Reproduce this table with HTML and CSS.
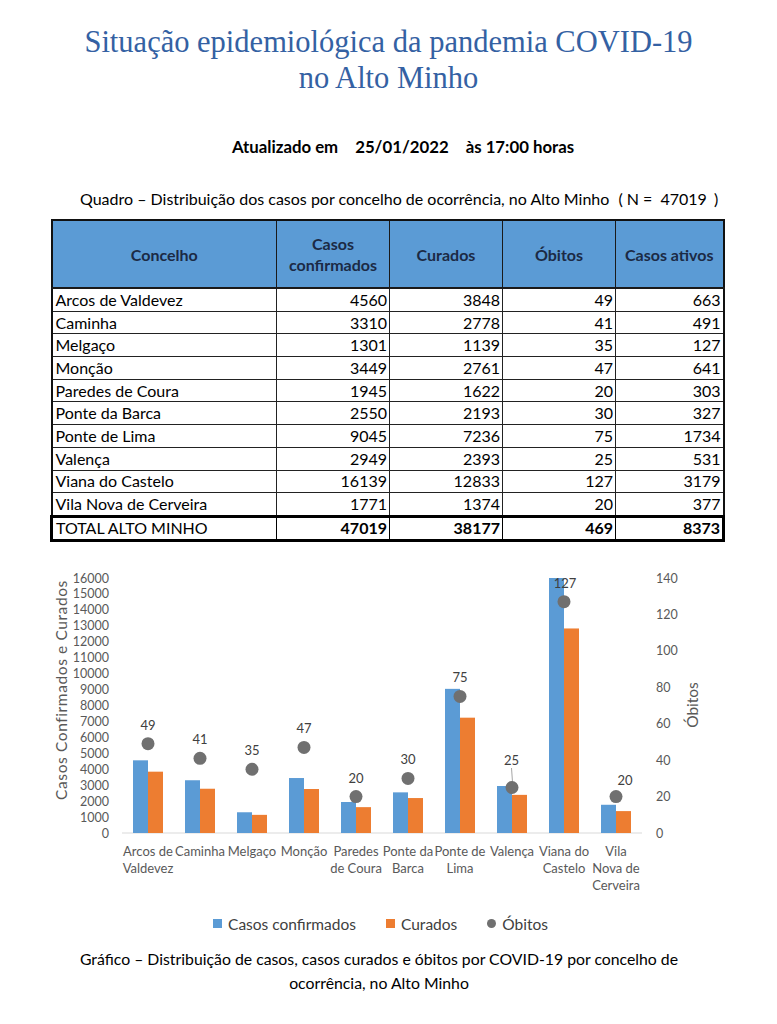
FILE: index.html
```html
<!DOCTYPE html>
<html lang="pt">
<head>
<meta charset="utf-8">
<title>Situação epidemiológica COVID-19 no Alto Minho</title>
<link rel="stylesheet" href="styles.css">
</head>
<body>
<h1 class="title">Situação epidemiológica da pandemia COVID-19<br>no Alto Minho</h1>

<p class="updated"><span>Atualizado em</span><span>25/01/2022</span><span>às 17:00 horas</span></p>

<p class="quadro">Quadro – Distribuição dos casos por concelho de ocorrência, no Alto Minho <span class="n">( N = <span class="nval">47019</span> )</span></p>

<table class="covid">
  <colgroup>
    <col class="c-name"><col class="c-num"><col class="c-num"><col class="c-num"><col class="c-last">
  </colgroup>
  <thead>
    <tr><th>Concelho</th><th>Casos<br>confirmados</th><th>Curados</th><th>Óbitos</th><th>Casos ativos</th></tr>
  </thead>
  <tbody>
    <tr><td>Arcos de Valdevez</td><td>4560</td><td>3848</td><td>49</td><td>663</td></tr>
    <tr><td>Caminha</td><td>3310</td><td>2778</td><td>41</td><td>491</td></tr>
    <tr><td>Melgaço</td><td>1301</td><td>1139</td><td>35</td><td>127</td></tr>
    <tr><td>Monção</td><td>3449</td><td>2761</td><td>47</td><td>641</td></tr>
    <tr><td>Paredes de Coura</td><td>1945</td><td>1622</td><td>20</td><td>303</td></tr>
    <tr><td>Ponte da Barca</td><td>2550</td><td>2193</td><td>30</td><td>327</td></tr>
    <tr><td>Ponte de Lima</td><td>9045</td><td>7236</td><td>75</td><td>1734</td></tr>
    <tr><td>Valença</td><td>2949</td><td>2393</td><td>25</td><td>531</td></tr>
    <tr><td>Viana do Castelo</td><td>16139</td><td>12833</td><td>127</td><td>3179</td></tr>
    <tr><td>Vila Nova de Cerveira</td><td>1771</td><td>1374</td><td>20</td><td>377</td></tr>
  </tbody>
  <tfoot>
    <tr class="total"><td>TOTAL ALTO MINHO</td><td>47019</td><td>38177</td><td>469</td><td>8373</td></tr>
  </tfoot>
</table>

<svg class="chart" viewBox="0 560 777 335" width="777" height="335" xmlns="http://www.w3.org/2000/svg">
  <g class="tick tl">
    <text x="109" y="832">0</text>
    <text x="109" y="816.06">1000</text>
    <text x="109" y="800.13">2000</text>
    <text x="109" y="784.19">3000</text>
    <text x="109" y="768.25">4000</text>
    <text x="109" y="752.31">5000</text>
    <text x="109" y="736.38">6000</text>
    <text x="109" y="720.44">7000</text>
    <text x="109" y="704.5">8000</text>
    <text x="109" y="688.56">9000</text>
    <text x="109" y="672.63">10000</text>
    <text x="109" y="656.69">11000</text>
    <text x="109" y="640.75">12000</text>
    <text x="109" y="624.81">13000</text>
    <text x="109" y="608.88">14000</text>
    <text x="109" y="592.94">15000</text>
    <text x="109" y="577">16000</text>
  </g>
  <g class="tick tr">
    <text x="656" y="832">0</text>
    <text x="656" y="795.57">20</text>
    <text x="656" y="759.14">40</text>
    <text x="656" y="722.71">60</text>
    <text x="656" y="686.29">80</text>
    <text x="656" y="649.86">100</text>
    <text x="656" y="613.43">120</text>
    <text x="656" y="577">140</text>
  </g>
  <text class="axis-title wide" transform="translate(61 689) rotate(-90)">Casos Confirmados e Curados</text>
  <text class="axis-title" transform="translate(692 704) rotate(-90)">Óbitos</text>

  <line class="baseline" x1="122" y1="832" x2="642" y2="832"/>

  <g class="conf">
    <rect x="133" y="759.32" width="15" height="72.68"/>
    <rect x="185" y="779.25" width="15" height="52.75"/>
    <rect x="237" y="811.27" width="15" height="20.73"/>
    <rect x="289" y="777.03" width="15" height="54.97"/>
    <rect x="341" y="801" width="15" height="31"/>
    <rect x="393" y="791.36" width="15" height="40.64"/>
    <rect x="445" y="687.85" width="15" height="144.15"/>
    <rect x="497" y="785" width="15" height="47"/>
    <rect x="549" y="577" width="15" height="255"/>
    <rect x="601" y="803.77" width="15" height="28.23"/>
  </g>
  <g class="cur">
    <rect x="148" y="770.67" width="15" height="61.33"/>
    <rect x="200" y="787.73" width="15" height="44.27"/>
    <rect x="252" y="813.85" width="15" height="18.15"/>
    <rect x="304" y="788" width="15" height="44"/>
    <rect x="356" y="806.15" width="15" height="25.85"/>
    <rect x="408" y="797.05" width="15" height="34.95"/>
    <rect x="460" y="716.68" width="15" height="115.32"/>
    <rect x="512" y="793.86" width="15" height="38.14"/>
    <rect x="564" y="627.47" width="15" height="204.53"/>
    <rect x="616" y="810.1" width="15" height="21.9"/>
  </g>

  <line class="leader" x1="511.5" y1="767" x2="512.5" y2="781"/>

  <g class="dot">
    <circle cx="148" cy="742.7" r="6.5"/>
    <circle cx="200" cy="757.3" r="6.5"/>
    <circle cx="252" cy="768.25" r="6.5"/>
    <circle cx="304" cy="746.4" r="6.5"/>
    <circle cx="356" cy="795.6" r="6.5"/>
    <circle cx="408" cy="777.4" r="6.5"/>
    <circle cx="460" cy="695.4" r="6.5"/>
    <circle cx="512" cy="786.5" r="6.5"/>
    <circle cx="564" cy="600.7" r="6.5"/>
    <circle cx="616" cy="795.6" r="6.5"/>
  </g>
  <g class="dlabel">
    <text x="148" y="723.7">49</text>
    <text x="200" y="738.3">41</text>
    <text x="252" y="749.25">35</text>
    <text x="304" y="727.4">47</text>
    <text x="356" y="776.6">20</text>
    <text x="408" y="758.4">30</text>
    <text x="460" y="676.4">75</text>
    <text x="511.5" y="759">25</text>
    <text x="565" y="582">127</text>
    <text x="625" y="779">20</text>
  </g>

  <g class="cat">
    <text x="148" y="850">Arcos de</text><text x="148" y="867">Valdevez</text>
    <text x="200" y="850">Caminha</text>
    <text x="252" y="850">Melgaço</text>
    <text x="304" y="850">Monção</text>
    <text x="356" y="850">Paredes</text><text x="356" y="867">de Coura</text>
    <text x="408" y="850">Ponte da</text><text x="408" y="867">Barca</text>
    <text x="460" y="850">Ponte de</text><text x="460" y="867">Lima</text>
    <text x="512" y="850">Valença</text>
    <text x="564" y="850">Viana do</text><text x="564" y="867">Castelo</text>
    <text x="616" y="850">Vila</text><text x="616" y="867">Nova de</text><text x="616" y="884">Cerveira</text>
  </g>
</svg>

<ul class="legend">
  <li><span class="mark sq blue"></span>Casos confirmados</li>
  <li><span class="mark sq orange"></span>Curados</li>
  <li><span class="mark circ"></span>Óbitos</li>
</ul>

<p class="caption">Gráfico – Distribuição de casos, casos curados e óbitos por COVID-19 por concelho de<br>ocorrência, no Alto Minho</p>
</body>
</html>
```

FILE: styles.css
```css
html, body {
  margin: 0;
  padding: 0;
  background: #ffffff;
}

body {
  width: 777px;
  font-family: Lato, "Open Sans", sans-serif;
  color: #000;
}

.title {
  margin: 0;
  padding-top: 24px;
  font-family: "Liberation Serif", serif;
  font-weight: normal;
  font-size: 30.5px;
  line-height: 36px;
  color: #3461a3;
  text-align: center;
}

.updated {
  margin: 41px 0 0;
  padding-left: 29px;
  display: flex;
  justify-content: center;
  gap: 17px;
  font-weight: bold;
  font-size: 16.8px;
  line-height: 20px;
}

.quadro {
  margin: 32px 0 0;
  padding-left: 80px;
  font-size: 16px;
  line-height: 20px;
}

.quadro .n {
  margin-left: 5px;
}

.quadro .nval {
  margin: 0 3px 0 4px;
}

.covid {
  margin: 10px 0 0 50px;
  width: 672px;
  border-collapse: collapse;
  table-layout: fixed;
  border: 2px solid #111;
  font-size: 16px;
}

.c-name { width: 225px; }
.c-num { width: 113px; }
.c-last { width: 108px; }

.covid th {
  height: 66px;
  background: #5b9bd5;
  color: #1b2a45;
  font-weight: bold;
  font-size: 16px;
  line-height: 21px;
  text-align: center;
  border: 1px solid #1a1a1a;
  border-bottom: 2px solid #1a1a1a;
  padding: 0;
}

.covid td {
  height: 21.7px;
  padding: 0 2px 0 3px;
  line-height: 20px;
  border: 1px solid #222;
  text-align: right;
  white-space: nowrap;
}

.covid td:first-child {
  text-align: left;
}

.covid .total td {
  height: 21px;
  border: 3px solid #000;
  border-left-width: 1px;
  border-right-width: 1px;
  font-weight: bold;
}

.covid .total td:first-child {
  font-weight: normal;
  border-left-width: 3px;
}

.covid .total td:last-child {
  border-right-width: 3px;
}

.chart {
  display: block;
  margin-top: 19px;
}

.tick text {
  font-family: Lato, sans-serif;
  font-size: 12.5px;
  fill: #595959;
  dominant-baseline: central;
}

.tl text { text-anchor: end; }
.tr text { text-anchor: start; }

.axis-title {
  font-family: Lato, sans-serif;
  font-size: 15.5px;
  fill: #595959;
  text-anchor: middle;
  dominant-baseline: central;
}

.axis-title.wide {
  letter-spacing: 0.6px;
}

.baseline {
  stroke: #d9d9d9;
  stroke-width: 1;
}

.conf rect { fill: #5b9bd5; }
.cur rect { fill: #ed7d31; }
.dot circle { fill: #707070; }

.leader {
  stroke: #a6a6a6;
  stroke-width: 1;
}

.dlabel text {
  font-family: Lato, sans-serif;
  font-size: 13px;
  fill: #404040;
  text-anchor: middle;
  dominant-baseline: central;
}

.cat text {
  font-family: Lato, sans-serif;
  font-size: 13px;
  fill: #595959;
  text-anchor: middle;
  dominant-baseline: central;
}

.legend {
  list-style: none;
  margin: 18px 0 0;
  padding: 0 16px 0 0;
  display: flex;
  justify-content: center;
  gap: 30px;
  font-size: 15.5px;
  line-height: 20px;
  color: #404040;
}

.legend li {
  display: flex;
  align-items: center;
  gap: 6px;
}

.mark {
  display: inline-block;
  width: 9px;
  height: 9px;
}

.mark.blue { background: #5b9bd5; }
.mark.orange { background: #ed7d31; }
.mark.circ { background: #707070; border-radius: 50%; }

.caption {
  margin: 13px 0 0;
  padding-right: 19px;
  text-align: center;
  font-size: 15.8px;
  line-height: 24px;
}
```
